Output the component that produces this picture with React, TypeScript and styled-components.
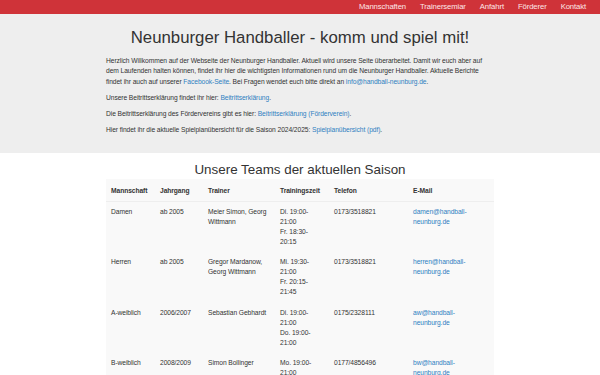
import { FC } from "react";
import styled, { createGlobalStyle } from "styled-components";

interface ITeam {
	name: string;
	year: string;
	trainer: string;
	times: string[];
	phone: string;
	email: string;
}

const navItems = ["Mannschaften", "Trainersemiar", "Anfahrt", "Förderer", "Kontakt"];

const teams: ITeam[] = [
	{
		name: "Damen",
		year: "ab 2005",
		trainer: "Meier Simon, Georg Wittmann",
		times: ["Di. 19:00-\u200b21:00", "Fr. 18:30-\u200b20:15"],
		phone: "0173/3518821",
		email: "damen@handball-neunburg.de",
	},
	{
		name: "Herren",
		year: "ab 2005",
		trainer: "Gregor Mardanow, Georg Wittmann",
		times: ["Mi. 19:30-\u200b21:00", "Fr. 20:15-\u200b21:45"],
		phone: "0173/3518821",
		email: "herren@handball-neunburg.de",
	},
	{
		name: "A-weiblich",
		year: "2006/2007",
		trainer: "Sebastian Gebhardt",
		times: ["Di. 19:00-\u200b21:00", "Do. 19:00-\u200b21:00"],
		phone: "0175/2328111",
		email: "aw@handball-neunburg.de",
	},
	{
		name: "B-weiblich",
		year: "2008/2009",
		trainer: "Simon Bollinger",
		times: ["Mo. 19:00-\u200b21:00", "Do. 17:30-\u200b19:00"],
		phone: "0177/4856496",
		email: "bw@handball-neunburg.de",
	},
];

const App: FC = () => {
	return (
		<>
			<GlobalStyle />
			<Navbar>
				{navItems.map((item) => (
					<NavLink key={item} href="#">
						{item}
					</NavLink>
				))}
			</Navbar>

			<Jumbotron>
				<Container>
					<Title>Neunburger Handballer - komm und spiel mit!</Title>
					<Text>
						Herzlich Willkommen auf der Webseite der Neunburger Handballer. Aktuell wird unsere Seite überarbeitet. Damit
						wir euch aber auf dem Laufenden halten können, findet ihr hier die wichtigsten Informationen rund um die
						Neunburger Handballer. Aktuelle Berichte findet ihr auch auf unserer <Link href="#">Facebook-Seite</Link>. Bei
						Fragen wendet euch bitte direkt an <Link href="#">info@handball-neunburg.de</Link>.
					</Text>
					<Text>
						Unsere Beitrittserklärung findet ihr hier: <Link href="#">Beitrittserklärung</Link>.
					</Text>
					<Text>
						Die Beitrittserklärung des Fördervereins gibt es hier: <Link href="#">Beitrittserklärung (Förderverein)</Link>.
					</Text>
					<Text>
						Hier findet ihr die aktuelle Spielplanübersicht für die Saison 2024/2025:{" "}
						<Link href="#">Spielplanübersicht (pdf)</Link>.
					</Text>
				</Container>
			</Jumbotron>

			<Container>
				<SectionTitle>Unsere Teams der aktuellen Saison</SectionTitle>
				<Table>
					<colgroup>
						<col style={{ width: 49 }} />
						<col style={{ width: 48 }} />
						<col style={{ width: 72 }} />
						<col style={{ width: 54 }} />
						<col style={{ width: 79 }} />
						<col />
					</colgroup>
					<thead>
						<tr>
							<Th>Mannschaft</Th>
							<Th>Jahrgang</Th>
							<Th>Trainer</Th>
							<Th>Trainingszeit</Th>
							<Th>Telefon</Th>
							<Th>E-Mail</Th>
						</tr>
					</thead>
					<tbody>
						{teams.map((team) => (
							<tr key={team.name}>
								<Td>{team.name}</Td>
								<Td>{team.year}</Td>
								<Td>{team.trainer}</Td>
								<Td>
									{team.times.map((time) => (
										<Time key={time}>{time}</Time>
									))}
								</Td>
								<Td>{team.phone}</Td>
								<Td>
									<Link href="#">{team.email}</Link>
								</Td>
							</tr>
						))}
					</tbody>
				</Table>
			</Container>
		</>
	);
};

export default App;

const GlobalStyle = createGlobalStyle`
	* {
		box-sizing: border-box;
	}

	body {
		margin: 0;
		background: #fff;
		color: #333;
		font-family: "Liberation Sans", Arial, sans-serif;
		font-size: 6.7px;
		line-height: 10.5px;
		letter-spacing: -0.08px;
	}
`;

const Navbar = styled.nav`
	height: 13.5px;
	display: flex;
	align-items: center;
	justify-content: flex-end;
	gap: 14px;
	padding-right: 14px;
	background-color: #cf3339;
`;

const NavLink = styled.a`
	font-size: 7.7px;
	letter-spacing: -0.1px;
	color: #fde8e8;
	text-decoration: none;
`;

const Jumbotron = styled.header`
	background-color: #eee;
	padding: 14.5px 0 11.75px;
`;

const Container = styled.div`
	width: 388px;
	margin: 0 auto;
`;

const Title = styled.h1`
	margin: 0 0 7.75px;
	font-size: 16.8px;
	font-weight: 400;
	line-height: 20px;
	letter-spacing: 0;
	text-align: center;
`;

const Text = styled.p`
	margin: 0 0 5.5px;
`;

const Link = styled.a`
	color: #2f7fc1;
	text-decoration: none;
`;

const SectionTitle = styled.h2`
	margin: 8.7px 0 0;
	font-size: 13.4px;
	font-weight: 400;
	line-height: 18px;
	letter-spacing: 0;
	text-align: center;
`;

const Table = styled.table`
	width: 100%;
	table-layout: fixed;
	border-collapse: collapse;
	background-color: #f9f9f9;
`;

const Th = styled.th`
	padding: 6.5px 5px 5px;
	font-weight: 700;
	line-height: 10px;
	text-align: left;
	border-bottom: 1px solid #eee;
`;

const Td = styled.td`
	padding: 5.25px 5px;
	line-height: 10px;
	vertical-align: top;
`;

const Time = styled.span`
	display: block;
`;
